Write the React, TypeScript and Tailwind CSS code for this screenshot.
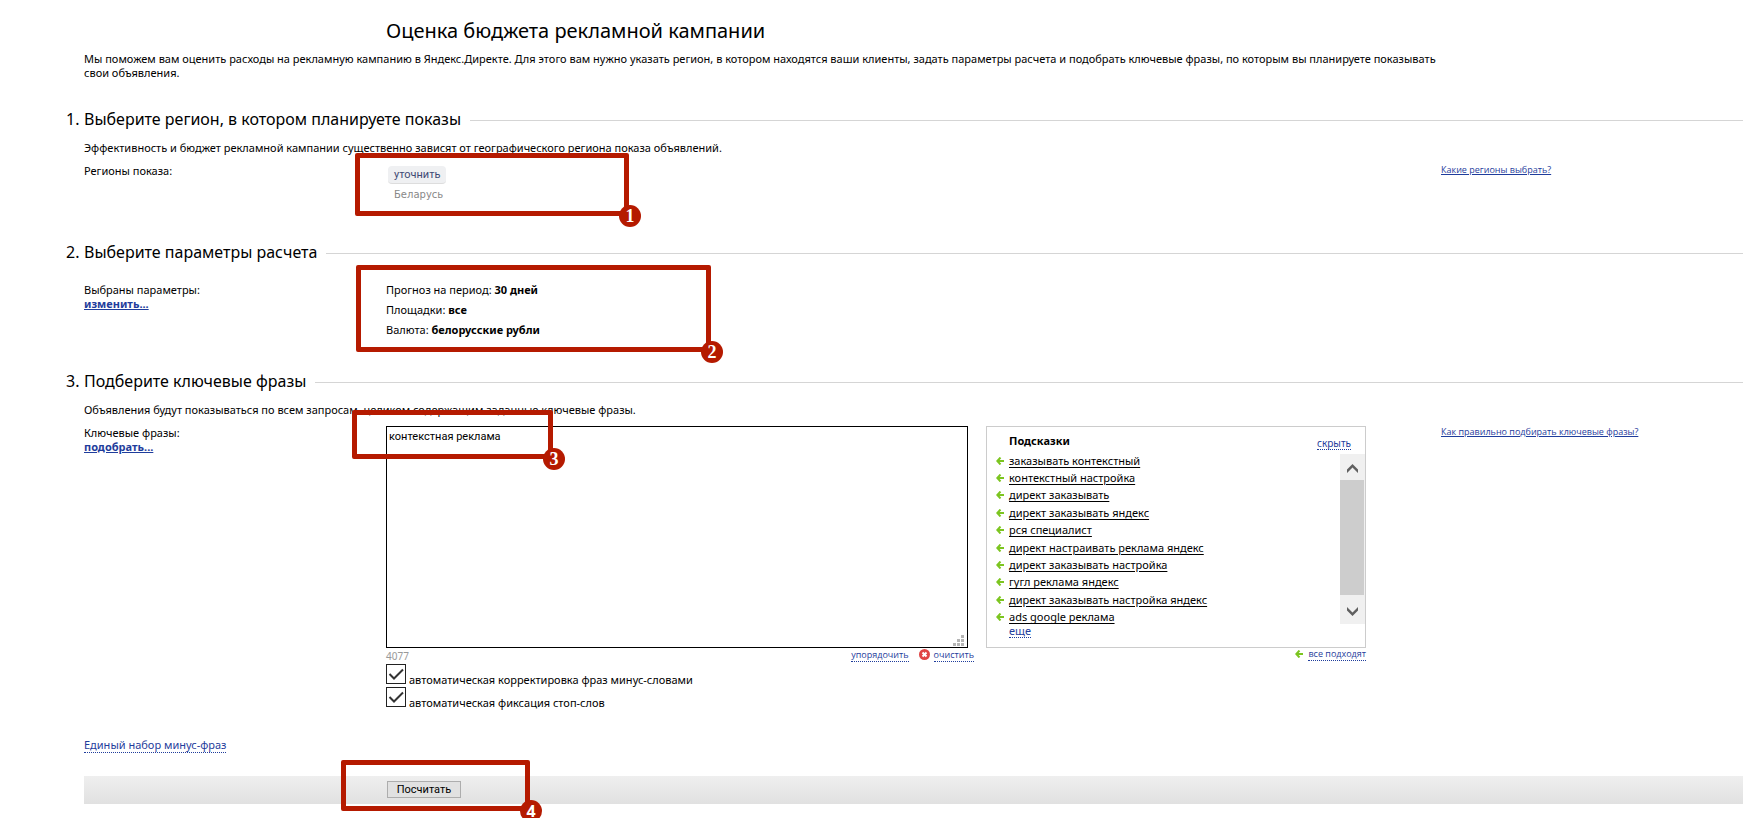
import React, { useState } from 'react';

const SUGGESTIONS = [
  'заказывать контекстный',
  'контекстный настройка',
  'директ заказывать',
  'директ заказывать яндекс',
  'рся специалист',
  'директ настраивать реклама яндекс',
  'директ заказывать настройка',
  'гугл реклама яндекс',
  'директ заказывать настройка яндекс',
  'ads google реклама',
];

const MAX_LENGTH = 4096;

const ArrowLeft: React.FC = () => (
  <svg className="w-2 h-2 shrink-0" viewBox="0 0 8 8" fill="none" stroke="#7cc520" strokeWidth={2}>
    <path d="M4.5 0.5L1.3 4L4.5 7.5M1.3 4H8" />
  </svg>
);

interface MarkerProps {
  num: number;
  className: string;
}

const Marker: React.FC<MarkerProps> = ({ num, className }) => (
  <div className={`absolute border-5 border-[#b51a00] rounded-xs pointer-events-none ${className}`}>
    <span
      className={`absolute -right-[17px] -bottom-4 size-[22px] rounded-full bg-[#b51a00] text-white leading-[22px] font-bold text-center ${num === 4 ? 'text-[16px] font-["Noto_Sans"]' : 'text-[18px] font-["Liberation_Serif"]'}`}
    >
      {num}
    </span>
  </div>
);

const SectionTitle: React.FC<{ num: number; title: string }> = ({ num, title }) => (
  <div className="flex items-center h-6 -ml-[18px]">
    <h2 className="flex text-[16px] leading-6"><span className="w-[18px]">{num}.</span>{title}</h2>
    <div className="flex-1 ml-[9px] mt-[2px] h-px bg-[#d5d5d5]" />
  </div>
);

interface CheckOptionProps {
  id: string;
  label: string;
}

const CheckOption: React.FC<CheckOptionProps> = ({ id, label }) => {
  const [checked, setChecked] = useState(true);

  return (
    <div className="flex items-baseline gap-[3px] h-5">
      <span className="relative size-5 shrink-0">
        <input
          id={id}
          type="checkbox"
          checked={checked}
          onChange={(e) => setChecked(e.target.checked)}
          className="appearance-none block size-5 border border-[#222] bg-white"
        />
        {checked && (
          <svg className="absolute inset-0 size-5 pointer-events-none" viewBox="0 0 20 20" fill="none" stroke="#333" strokeWidth={2}>
            <path d="M3.5 10L8 14.5L17 5.5" />
          </svg>
        )}
      </span>
      <label htmlFor={id} className="leading-[14px]">{label}</label>
    </div>
  );
};

const App: React.FC = () => {
  const [phrases, setPhrases] = useState('контекстная реклама');

  return (
    <div className='min-h-screen overflow-hidden bg-white pl-[84px] pr-4 pt-[18px] text-[11px] leading-[14px] text-black font-["Noto_Sans",sans-serif]'>
      <h1 className="ml-[302px] text-[20px] leading-[26px]">Оценка бюджета рекламной кампании</h1>
      <p className="mt-2 mr-[302px]">
        Мы поможем вам оценить расходы на рекламную кампанию в Яндекс.Директе. Для этого вам нужно указать регион, в котором находятся ваши клиенты, задать параметры расчета и подобрать ключевые фразы, по которым вы планируете показывать свои объявления.
      </p>

      <section className="mt-[27px]">
        <SectionTitle num={1} title="Выберите регион, в котором планируете показы" />
        <p className="mt-[10px]">Эффективность и бюджет рекламной кампании существенно зависят от географического региона показа объявлений.</p>
        <div className="mt-[9px] grid grid-cols-[302px_1fr_302px] h-[76px]">
          <div>Регионы показа:</div>
          <div className="relative pl-[2px] pt-[2px]">
            <button className='block h-[18px] px-[6px] rounded-sm border-b border-[#ddd] bg-[#eff0f2] text-[#3f4a74] text-[11px] leading-[16px] font-["Roboto",sans-serif]'>уточнить</button>
            <div className='mt-1 ml-[6px] text-[10px] text-[#888] font-["DejaVu_Sans",sans-serif]'>Беларусь</div>
            <Marker num={1} className="-left-[31px] -top-[11px] w-[274px] h-[63px]" />
          </div>
          <div>
            <a href="#regions" className='block text-[9px] leading-[11px] text-[#1f3d9c] underline font-["Open_Sans",sans-serif]'>Какие регионы выбрать?</a>
          </div>
        </div>
      </section>

      <section>
        <SectionTitle num={2} title="Выберите параметры расчета" />
        <div className="mt-[19px] grid grid-cols-[302px_1fr] h-[86px]">
          <div>
            <div>Выбраны параметры:</div>
            <a href="#params" className="font-bold text-[#1f3d9c] underline">изменить...</a>
          </div>
          <div className="relative space-y-[6px]">
            <div>Прогноз на период: <b>30 дней</b></div>
            <div>Площадки: <b>все</b></div>
            <div>Валюта: <b>белорусские рубли</b></div>
            <Marker num={2} className="-left-[30px] -top-[18px] w-[355px] h-[87px]" />
          </div>
        </div>
      </section>

      <section>
        <SectionTitle num={3} title="Подберите ключевые фразы" />
        <p className="mt-[10px]">Объявления будут показываться по всем запросам, целиком содержащим заданные ключевые фразы.</p>
        <div className="mt-[9px] grid grid-cols-[302px_1fr_302px]">
          <div>
            <label htmlFor="phrases" className="block">Ключевые фразы:</label>
            <a href="#pick" className="font-bold text-[#1f3d9c] underline">подобрать...</a>
          </div>
          <div className="relative flex">
            <div className="w-[582px]">
              <div className="relative">
                <textarea
                  id="phrases"
                  value={phrases}
                  onChange={(e) => setPhrases(e.target.value)}
                  className='block w-full h-[222px] resize-none border border-black bg-white px-[2px] py-[3px] text-[11px] leading-[14px] outline-none font-["Roboto",sans-serif]'
                />
                <svg className="absolute right-1 bottom-[2px] w-[11px] h-[11px]" viewBox="0 0 11 11" fill="#b5b5b5">
                  <path d="M8 0h3v3h-3zM4 4h3v3h-3zM8 4h3v3h-3zM0 8h3v3h-3zM4 8h3v3h-3zM8 8h3v3h-3z" />
                </svg>
              </div>
              <div className='flex items-start h-4 pt-px -mr-[6px] text-[9px] font-["Open_Sans",sans-serif]'>
                <span className='text-[10px] text-[#999] font-["Noto_Sans",sans-serif]'>{MAX_LENGTH - phrases.length}</span>
                <button className="ml-auto border-b border-dotted border-[#1f3d9c] text-[#1f3d9c] leading-[12px]">упорядочить</button>
                <svg className="ml-[10px] mr-1 size-[11px]" viewBox="0 0 11 11">
                  <circle cx="5.5" cy="5.5" r="5.5" fill="#e04545" />
                  <path d="M3.5 3.5l4 4M7.5 3.5l-4 4" stroke="#fff" strokeWidth={2} />
                </svg>
                <button onClick={() => setPhrases('')} className="border-b border-dotted border-[#1f3d9c] text-[#1f3d9c] leading-[12px]">очистить</button>
              </div>
              <div className="space-y-[3px]">
                <CheckOption id="minus" label="автоматическая корректировка фраз минус-словами" />
                <CheckOption id="stop" label="автоматическая фиксация стоп-слов" />
              </div>
            </div>
            <div className="ml-[18px] w-[380px]">
              <div className="h-[222px] border border-[#ccc] pl-[9px]">
                <div className="flex justify-between h-[25px] pl-[13px] pr-[14px] pt-[7px]">
                  <b>Подсказки</b>
                  <button className="mt-[3px] h-[13px] border-b border-dotted border-[#1f3d9c] text-[#1f3d9c] text-[10px] leading-[12px]">скрыть</button>
                </div>
                <div className="flex h-[174px]">
                  <ul className="flex-1 grid auto-rows-fr">
                    {SUGGESTIONS.map(s => (
                      <li key={s} className="flex items-center gap-[5px]">
                        <ArrowLeft />
                        <button className="underline underline-offset-2">{s}</button>
                      </li>
                    ))}
                  </ul>
                  <div className="w-[25px] my-[2px] flex flex-col bg-[#f0f0f0]">
                    <svg className="w-full h-[26px]" viewBox="0 0 25 26" fill="#606060">
                      <path d="M12.5 10L18 15.5V19L12.5 13.5L7 19V15.5z" />
                    </svg>
                    <div className="flex-1 mr-px bg-[#cdcdcd]" />
                    <svg className="w-full h-[29px]" viewBox="0 0 25 29" fill="#606060">
                      <path d="M12.5 21L18 15.5V12L12.5 17.5L7 12V15.5z" />
                    </svg>
                  </div>
                </div>
                <button className="block -mt-[2px] ml-[13px] h-[14px] border-b border-dotted border-[#1f3d9c] text-[#1f3d9c] leading-[12px]">еще</button>
              </div>
              <div className='flex justify-end items-center gap-[5px] h-3 text-[9px] font-["Open_Sans",sans-serif]'>
                <ArrowLeft />
                <button className="border-b border-dotted border-[#1f3d9c] text-[#1f3d9c] leading-[12px]">все подходят</button>
              </div>
            </div>
            <Marker num={3} className="-left-[34px] -top-4 w-[201px] h-[49px]" />
          </div>
          <div>
            <a href="#help" className='block text-[9px] leading-[11px] text-[#1f3d9c] underline font-["Open_Sans",sans-serif]'>Как правильно подбирать ключевые фразы?</a>
          </div>
        </div>
      </section>

      <div className="mt-[31px] flex">
        <a href="#minus-set" className="border-b border-dotted border-[#1f3d9c] leading-[14px] text-[#1f3d9c]">Единый набор минус-фраз</a>
      </div>

      <div className="relative mt-[23px] h-7 pl-[303px] pt-[5px] bg-linear-to-b from-[#efefef] to-[#e1e1e1]">
        <button className='block w-[74px] h-[17px] border border-[#adadad] bg-[#e1e1e1] text-[11px] leading-[15px] font-["Roboto",sans-serif]'>Посчитать</button>
        <Marker num={4} className="left-[257px] -top-4 w-[189px] h-[51px]" />
      </div>
    </div>
  );
};

export default App;
